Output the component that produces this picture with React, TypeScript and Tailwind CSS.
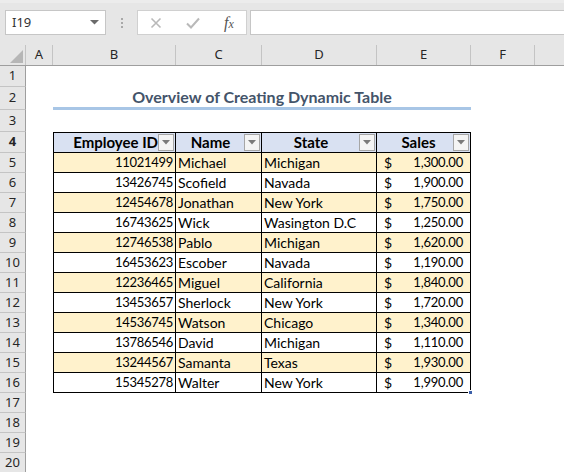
import React from "react";

const DATA = [
  ["11021499", "Michael", "Michigan", "1,300.00"],
  ["13426745", "Scofield", "Navada", "1,900.00"],
  ["12454678", "Jonathan", "New York", "1,750.00"],
  ["16743625", "Wick", "Wasington D.C", "1,250.00"],
  ["12746538", "Pablo", "Michigan", "1,620.00"],
  ["16453623", "Escober", "Navada", "1,190.00"],
  ["12236465", "Miguel", "California", "1,840.00"],
  ["13453657", "Sherlock", "New York", "1,720.00"],
  ["14536745", "Watson", "Chicago", "1,340.00"],
  ["13786546", "David", "Michigan", "1,110.00"],
  ["13244567", "Samanta", "Texas", "1,930.00"],
  ["15345278", "Walter", "New York", "1,990.00"],
];

function RowHead({ n }: { n: number }) {
  return (
    <div className="w-[26px] shrink-0 bg-[#e6e6e6] border-r border-b border-r-[#9e9e9e] border-b-[#c4c4c4] flex items-center justify-center text-[13px] text-[#262626] font-['Noto_Sans',sans-serif]">
      {n}
    </div>
  );
}

function FilterButton() {
  return (
    <span className="absolute right-[1px] top-[1px] w-[16px] h-[17px] bg-[#f4f4f4] border border-[#a6a6a6] flex items-center justify-center">
      <svg width="8" height="5" viewBox="0 0 8 5">
        <path d="M0 0 H8 L4 4.5 Z" fill="#7a7a7a" />
      </svg>
    </span>
  );
}

function EmptyRow({ n, h }: { n: number; h: string }) {
  return (
    <div className={`flex ${h}`}>
      <RowHead n={n} />
      <div className="flex-1 bg-white" />
    </div>
  );
}

export default function App() {
  return (
    <div className="w-[564px] h-[472px] overflow-hidden bg-white font-['Lato',sans-serif] text-black select-none">
      {/* formula bar */}
      <div className="h-[45px] bg-[#e6e6e6] flex items-start pt-[10px] pl-[5px] border-t-[3px] border-t-[#ececec]">
        <div className="w-[101px] h-[25px] -mt-[3px] bg-white border border-[#c6c6c6] flex items-center justify-between pl-[6px] pr-[6px] font-['Noto_Sans',sans-serif] text-[13px] text-[#333]">
          <span>I19</span>
          <svg width="9" height="5" viewBox="0 0 9 5">
            <path d="M0 0 H9 L4.5 4.5 Z" fill="#6b6b6b" />
          </svg>
        </div>
        <div className="w-[31px] h-[25px] -mt-[3px] flex flex-col items-center justify-center gap-[2px]">
          <span className="w-[2px] h-[2px] bg-[#a8a8a8]" />
          <span className="w-[2px] h-[2px] bg-[#a8a8a8]" />
          <span className="w-[2px] h-[2px] bg-[#a8a8a8]" />
        </div>
        <div className="w-[110px] h-[25px] -mt-[3px] bg-white border border-[#d0d0d0] flex items-center">
          <div className="w-[36px] flex justify-center">
            <svg width="12" height="12" viewBox="0 0 12 12">
              <path d="M1.5 1.5 L10.5 10.5 M10.5 1.5 L1.5 10.5" stroke="#b9b9b9" strokeWidth="1.6" />
            </svg>
          </div>
          <div className="w-[38px] flex justify-center">
            <svg width="14" height="12" viewBox="0 0 14 12">
              <path d="M1 6.5 L5 10.5 L13 1.5" stroke="#b9b9b9" strokeWidth="2" fill="none" />
            </svg>
          </div>
          <div className="flex-1 flex justify-center font-['Liberation_Serif',serif] italic text-[16px] text-[#555]">
            <span>f</span>
            <span className="text-[12px] mt-[4px]">x</span>
          </div>
        </div>
        <div className="flex-1 h-[25px] -mt-[3px] ml-[3px] bg-white border-y border-l border-[#c6c6c6]" />
      </div>

      {/* column headers */}
      <div className="flex h-[21px] bg-[#e6e6e6] border-b border-[#9e9e9e] font-['Noto_Sans',sans-serif] text-[13px] text-[#262626]">
        <div className="w-[26px] shrink-0 border-r border-[#c4c4c4] relative">
          <svg className="absolute right-[2px] bottom-[2px]" width="13" height="13" viewBox="0 0 13 13">
            <path d="M13 0 V13 H0 Z" fill="#b6b6b6" />
          </svg>
        </div>
        <div className="w-[27px] shrink-0 border-r border-[#c4c4c4] flex items-center justify-center">A</div>
        <div className="w-[123px] shrink-0 border-r border-[#c4c4c4] flex items-center justify-center">B</div>
        <div className="w-[86px] shrink-0 border-r border-[#c4c4c4] flex items-center justify-center">C</div>
        <div className="w-[115px] shrink-0 border-r border-[#c4c4c4] flex items-center justify-center">D</div>
        <div className="w-[94px] shrink-0 border-r border-[#c4c4c4] flex items-center justify-center">E</div>
        <div className="w-[64px] shrink-0 border-r border-[#c4c4c4] flex items-center justify-center">F</div>
        <div className="flex-1" />
      </div>

      <EmptyRow n={1} h="h-[21px]" />

      {/* title row */}
      <div className="flex h-[23px]">
        <RowHead n={2} />
        <div className="w-[27px] shrink-0" />
        <div className="w-[418px] shrink-0 border-b-[3px] border-[#a8c6e6] flex items-center justify-center text-[16px] font-bold text-[#44546a]">
          Overview of Creating Dynamic Table
        </div>
        <div className="flex-1" />
      </div>

      <EmptyRow n={3} h="h-[22px]" />

      {/* table header */}
      <div className="flex h-[21px] text-[15px] font-bold">
        <RowHead n={4} />
        <div className="w-[27px] shrink-0" />
        <div className="w-[123px] shrink-0 relative bg-[#d9e1f2] border border-black flex items-center justify-end pr-[17px]">
          Employee ID
          <FilterButton />
        </div>
        <div className="w-[86px] shrink-0 relative bg-[#d9e1f2] border-y border-r border-black flex items-center justify-center pr-[16px]">
          Name
          <FilterButton />
        </div>
        <div className="w-[115px] shrink-0 relative bg-[#d9e1f2] border-y border-r border-black flex items-center justify-center pr-[16px]">
          State
          <FilterButton />
        </div>
        <div className="w-[94px] shrink-0 relative bg-[#d9e1f2] border-y border-r border-black flex items-center justify-center pr-[10px]">
          Sales
          <FilterButton />
        </div>
        <div className="flex-1" />
      </div>

      {DATA.map((r, i) => {
        const bg = i % 2 === 0 ? "bg-[#fff2cc]" : "bg-white";
        const last = i === DATA.length - 1;
        return (
          <div key={r[0]} className="flex h-[20px] text-[14px]">
            <RowHead n={5 + i} />
            <div className="w-[27px] shrink-0" />
            <div className={`w-[123px] shrink-0 ${bg} border-x border-b border-black flex items-center justify-end pr-[2px] text-[13px] tracking-[-0.3px]`}>
              {r[0]}
            </div>
            <div className={`w-[86px] shrink-0 ${bg} border-r border-b border-black flex items-center pl-[2px]`}>
              {r[1]}
            </div>
            <div className={`w-[115px] shrink-0 ${bg} border-r border-b border-black flex items-center pl-[2px]`}>
              {r[2]}
            </div>
            <div className={`w-[94px] shrink-0 relative ${bg} border-r border-b border-black flex items-center justify-between pl-[7px] pr-[7px]`}>
              <span>$</span>
              <span className="text-[13px] tracking-[-0.2px]">{r[3]}</span>
              {last && <span className="absolute -right-[3px] -bottom-[3px] w-[5px] h-[5px] bg-[#3b5ea8] border border-white" />}
            </div>
            <div className="flex-1" />
          </div>
        );
      })}

      <EmptyRow n={17} h="h-[20px]" />
      <EmptyRow n={18} h="h-[20px]" />
      <EmptyRow n={19} h="h-[20px]" />
      <EmptyRow n={20} h="h-[20px]" />
    </div>
  );
}
